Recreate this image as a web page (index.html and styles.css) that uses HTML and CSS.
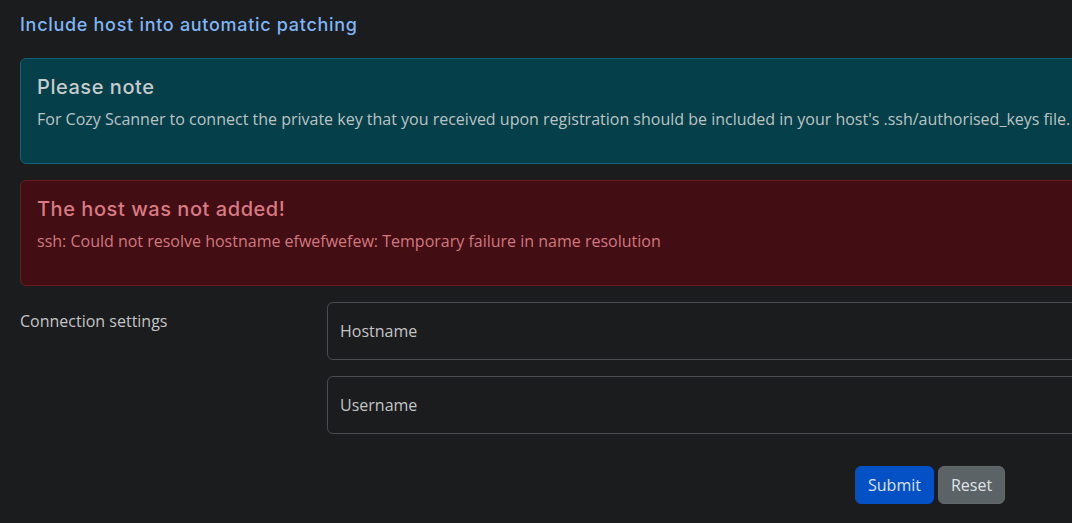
FILE: index.html
```html
<!DOCTYPE html>
<html lang="en">
<head>
<meta charset="utf-8">
<title>Include host</title>
<link rel="stylesheet" href="styles.css">
</head>
<body>
<main class="page">
  <h5 class="page-title">Include host into automatic patching</h5>

  <div class="alert alert-info">
    <h4 class="alert-heading">Please note</h4>
    <p>For Cozy Scanner to connect the private key that you received upon registration should be included in your host's .ssh/authorised_keys file.</p>
  </div>

  <div class="alert alert-danger">
    <h4 class="alert-heading">The host was not added!</h4>
    <p>ssh: Could not resolve hostname efwefwefew: Temporary failure in name resolution</p>
  </div>

  <form class="form-row">
    <label class="form-label">Connection settings</label>
    <div class="fields">
      <input class="field" type="text" placeholder="Hostname">
      <input class="field" type="text" placeholder="Username">
    </div>
  </form>

  <div class="actions">
    <button class="btn btn-primary" type="button">Submit</button>
    <button class="btn btn-secondary" type="button">Reset</button>
  </div>
</main>
</body>
</html>
```

FILE: styles.css
```css
html, body {
  margin: 0;
  padding: 0;
  overflow: hidden;
  background: #1b1c1e;
}
body {
  font-family: "Open Sans", "Noto Sans", sans-serif;
  font-size: 16px;
  line-height: 1.5;
  color: #c3c5c6;
}
.page {
  width: 1120px;
  padding: 14px 0 0 20px;
}
.page-title {
  font-family: Inter, "Noto Sans", sans-serif;
  font-weight: 500;
  font-size: 18px;
  line-height: 22px;
  letter-spacing: 0.7px;
  color: #7fb4f5;
  margin: 0 0 22px 0;
}
.alert {
  border: 1px solid;
  border-radius: 6px;
  padding: 16px;
  margin-bottom: 16px;
}
.alert-heading {
  font-family: Inter, "Noto Sans", sans-serif;
  font-weight: 500;
  font-size: 20px;
  line-height: 24px;
  letter-spacing: 0.55px;
  margin: 0 0 8px 0;
}
.alert p {
  margin: 0 0 16px 0;
}
.alert-info {
  background: #05404a;
  border-color: #0b6478;
  color: #bcc3c4;
}
.alert-info .alert-heading { color: #c6cbcc; }
.alert-danger {
  background: #420e13;
  border-color: #6b1a22;
  color: #d27780;
}
.alert-danger .alert-heading { color: #d97a84; }

.form-row {
  display: grid;
  grid-template-columns: 307px 1fr;
}
.form-label {
  padding-top: 7px;
  line-height: 24px;
  color: #c4c5c5;
}
.fields {
  display: flex;
  flex-direction: column;
  gap: 16px;
}
.field {
  height: 58px;
  box-sizing: border-box;
  border: 1px solid #494c50;
  border-radius: 6px;
  background: #1b1c1e;
  padding: 0 12px;
  font-family: "Open Sans", "Noto Sans", sans-serif;
  font-size: 16px;
  color: #c3c5c6;
  outline: none;
}
.field::placeholder { color: #c3c4c4; }

.actions {
  display: flex;
  gap: 4px;
  margin: 32px 0 0 835px;
}
.btn {
  height: 38px;
  box-sizing: border-box;
  border: 1px solid transparent;
  border-radius: 6px;
  padding: 0 12px;
  font-family: "Open Sans", "Noto Sans", sans-serif;
  font-size: 16px;
  line-height: 24px;
  color: #dee2e6;
  cursor: pointer;
}
.btn-primary {
  background: #0451c6;
  border-color: #0451c6;
}
.btn-secondary {
  background: #5c6366;
  border-color: #63676a;
}
```
